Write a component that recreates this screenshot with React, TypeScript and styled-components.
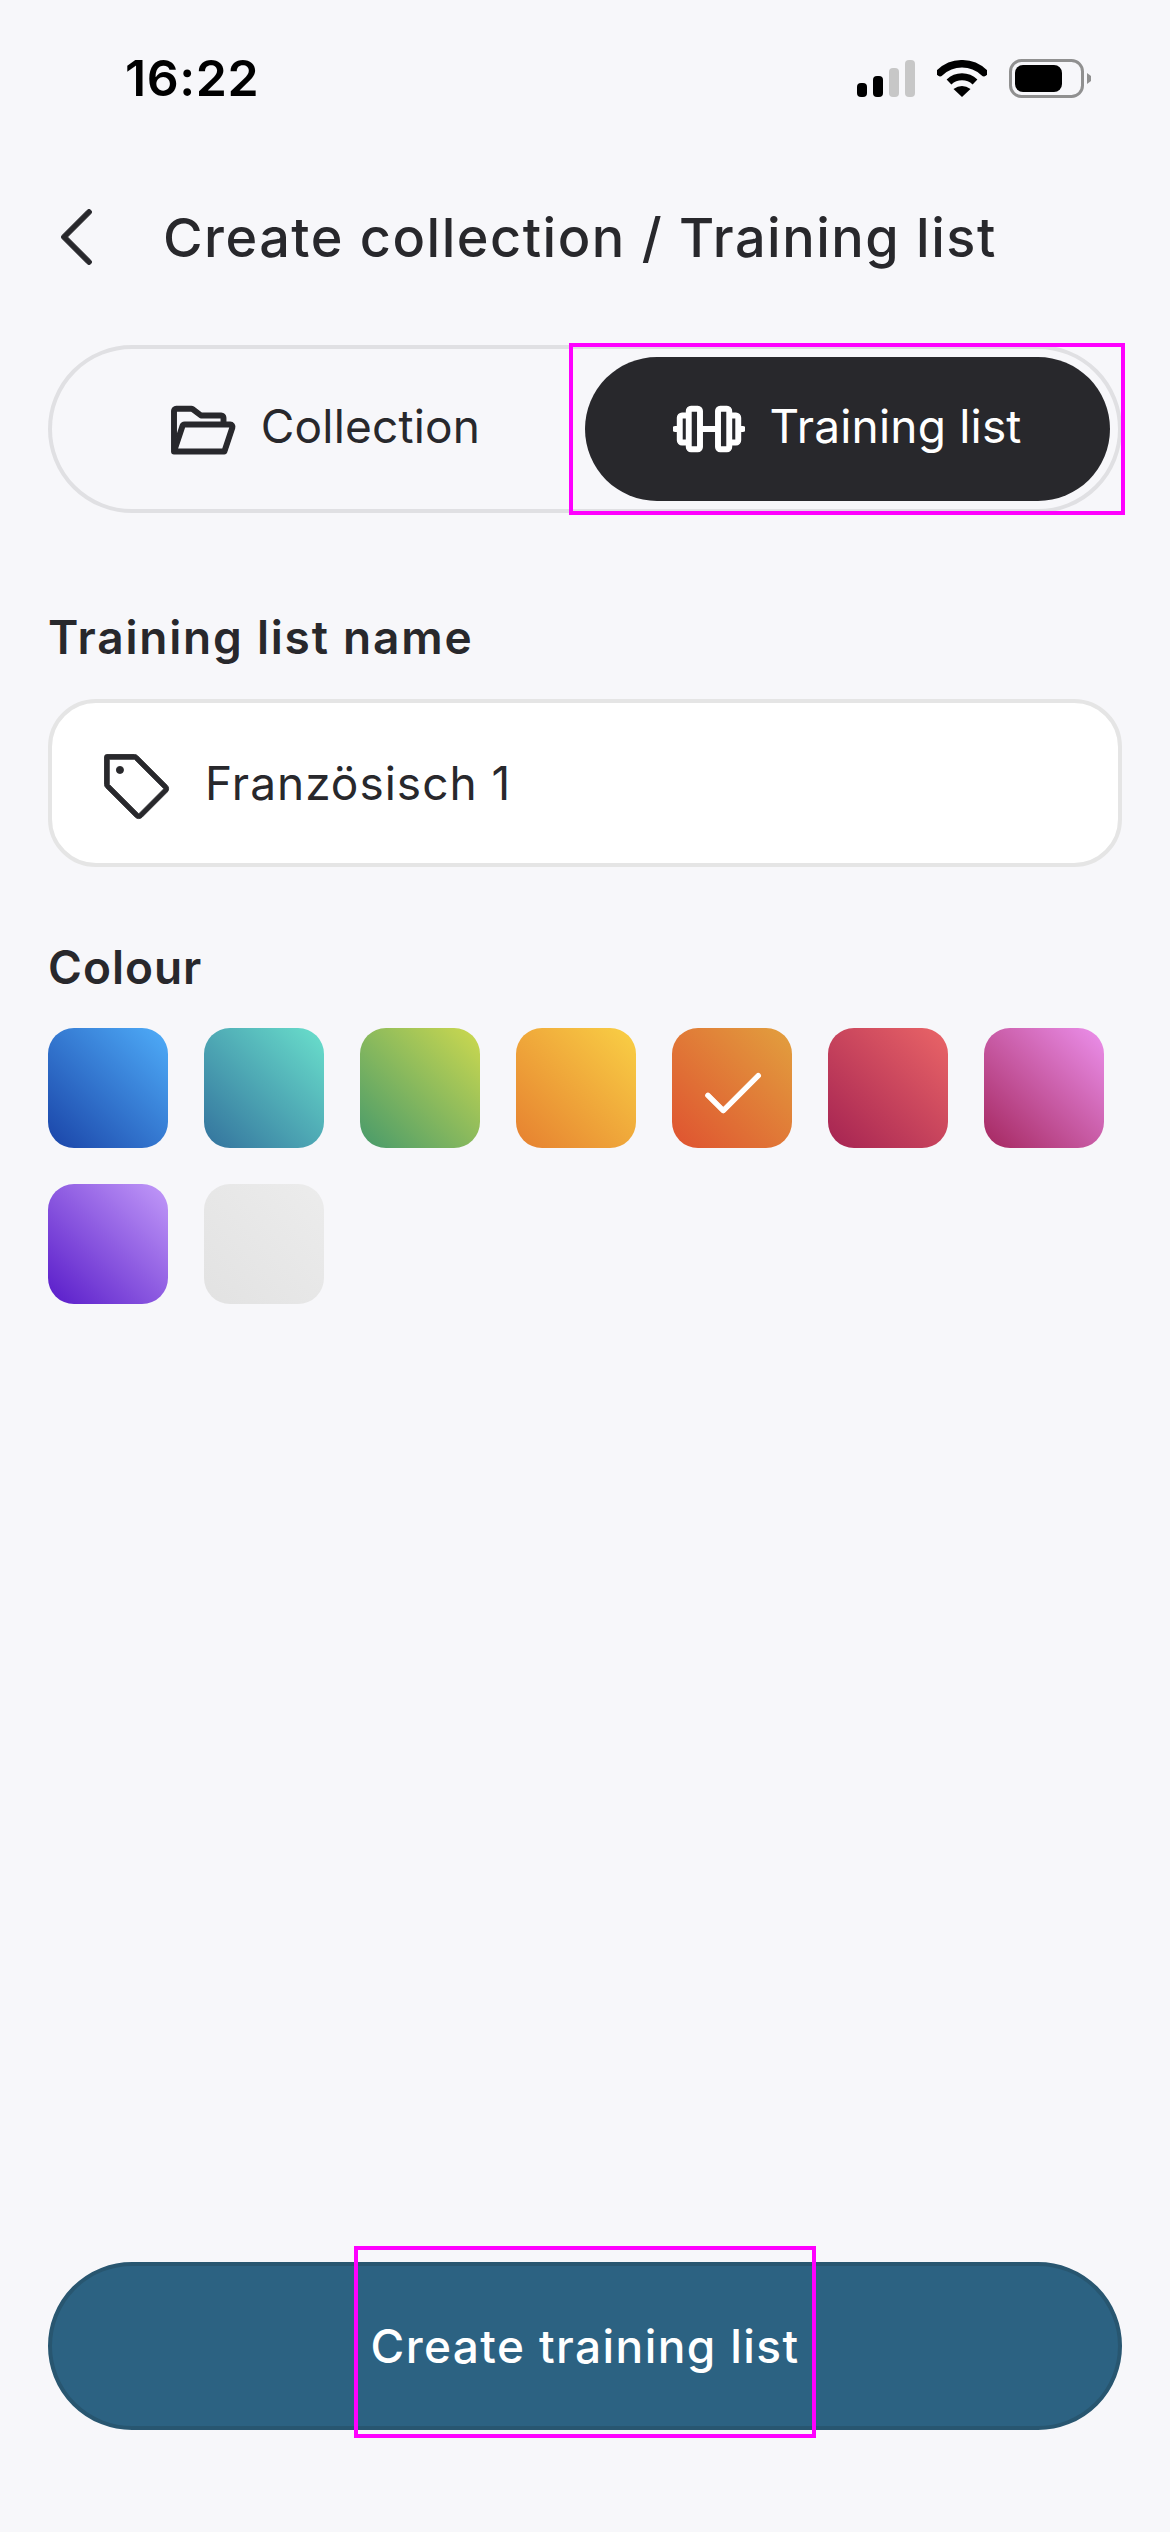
import React from "react";
import styled, { createGlobalStyle } from "styled-components";
import { PiBarbell, PiCaretLeft, PiCheck, PiFolderOpen, PiTag } from "react-icons/pi";

const GlobalStyle = createGlobalStyle`
  * {
    box-sizing: border-box;
  }
  body {
    margin: 0;
    background: #f7f7fa;
    font-family: Inter, "Noto Sans", sans-serif;
    color: #28282c;
  }
`;

const Page = styled.div`
  width: 1170px;
  height: 2532px;
  padding: 0 48px 102px;
  display: flex;
  flex-direction: column;
`;

const StatusBar = styled.div`
  height: 116px;
  margin: 0 -48px;
  padding: 40px 79px 0 125px;
  display: flex;
  align-items: center;
  justify-content: space-between;
`;

const Time = styled.div`
  font-size: 50px;
  font-weight: 600;
  letter-spacing: 0.6px;
  color: #000;
`;

const StatusIcons = styled.div`
  display: flex;
  align-items: center;
  gap: 22px;
`;

const TitleRow = styled.div`
  height: 122px;
  margin-top: 60px;
  display: flex;
  align-items: center;
  font-size: 54px;
  font-weight: 500;
  letter-spacing: 1.5px;
`;

const BackIcon = styled(PiCaretLeft)`
  font-size: 80px;
  margin-left: -9px;
  margin-right: 44px;
  flex: none;
  stroke: currentColor;
  stroke-width: 3;
`;

const Tabs = styled.div`
  margin-top: 47px;
  height: 168px;
  padding: 8px;
  border: 4px solid #e0e0e3;
  border-radius: 84px;
  display: flex;
`;

const Tab = styled.div<{ $active?: boolean }>`
  position: relative;
  flex: 1;
  border-radius: 72px;
  display: flex;
  align-items: center;
  justify-content: center;
  gap: 24px;
  font-size: 46px;
  letter-spacing: 0.2px;
  background: ${(props) => (props.$active ? "#28282c" : "transparent")};
  color: ${(props) => (props.$active ? "#fff" : "#28282c")};

  svg {
    font-size: 72px;
    flex: none;
    stroke: currentColor;
    stroke-width: 5;
  }
`;

const TabLabel = styled.span`
  margin-top: -6px;
`;

const Marker = styled.div<{ $top: number; $bottom: number; $left: number; $right: number }>`
  position: absolute;
  top: ${(props) => props.$top}px;
  bottom: ${(props) => props.$bottom}px;
  left: ${(props) => props.$left}px;
  right: ${(props) => props.$right}px;
  border: 4px solid #ff00ff;
  pointer-events: none;
`;

const FieldLabel = styled.div`
  font-size: 46px;
  font-weight: 600;
  letter-spacing: 1.8px;
  line-height: 56px;
`;

const NameLabel = styled(FieldLabel)`
  margin-top: 96px;
`;

const ColourLabel = styled(FieldLabel)`
  margin-top: 72px;
  letter-spacing: 1px;
`;

const NameInput = styled.div`
  margin-top: 34px;
  height: 168px;
  padding: 0 43px;
  background: #fff;
  border: 4px solid #e5e5e5;
  border-radius: 48px;
  display: flex;
  align-items: center;
  gap: 34px;
  font-size: 46px;
  letter-spacing: 1px;

  svg {
    font-size: 76px;
    flex: none;
    stroke: currentColor;
    stroke-width: 3;
  }
`;

const Swatches = styled.div`
  margin-top: 33px;
  display: grid;
  grid-template-columns: repeat(7, 120px);
  gap: 36px;
`;

const Swatch = styled.div<{ $from: string; $to: string }>`
  height: 120px;
  padding-top: 6px;
  border-radius: 26px;
  display: flex;
  align-items: center;
  justify-content: center;
  color: #fff;
  font-size: 70px;
  background: linear-gradient(45deg, ${(props) => props.$from}, ${(props) => props.$to});

  svg {
    stroke: currentColor;
    stroke-width: 4;
  }
`;

const CreateButton = styled.div`
  position: relative;
  margin-top: auto;
  height: 168px;
  background: #2c6282;
  border: 4px solid #285670;
  border-radius: 84px;
  display: flex;
  align-items: center;
  justify-content: center;
  color: #fff;
  font-size: 46px;
  font-weight: 500;
  letter-spacing: 1.4px;
`;

const colours = [
  { from: "#1a44a8", to: "#4fadf9" },
  { from: "#33729d", to: "#6ae0cc" },
  { from: "#479a6b", to: "#cdd94f" },
  { from: "#e68030", to: "#f9d045" },
  { from: "#df5230", to: "#e2a03e", selected: true },
  { from: "#a52352", to: "#ea6567" },
  { from: "#a5275f", to: "#ec90ec" },
  { from: "#581bc9", to: "#c29af9" },
  { from: "#e2e2e2", to: "#ececec" },
];

const SignalIcon = () => (
  <svg width="58" height="37" viewBox="0 0 58 37">
    <rect x="0" y="23" width="10" height="14" rx="4" fill="#000" />
    <rect x="16" y="16" width="10" height="21" rx="4" fill="#000" />
    <rect x="32" y="8" width="10" height="29" rx="4" fill="#c7c7c7" />
    <rect x="48" y="0" width="10" height="37" rx="4" fill="#c7c7c7" />
  </svg>
);

const WifiIcon = () => (
  <svg width="50" height="37" viewBox="0 0 50 37">
    <path d="M3 12.5 A32 32 0 0 1 47 12.5" fill="none" stroke="#000" strokeWidth="7.5" strokeLinecap="round" />
    <path d="M12 22 A19 19 0 0 1 38 22" fill="none" stroke="#000" strokeWidth="7" strokeLinecap="butt" />
    <path d="M25 37 L16.5 29 Q25 23 33.5 29 Z" fill="#000" />
  </svg>
);

const BatteryIcon = () => (
  <svg width="82" height="39" viewBox="0 0 82 39">
    <rect x="1.5" y="1.5" width="72" height="36" rx="11" fill="none" stroke="#909090" strokeWidth="3" />
    <rect x="6" y="6" width="47" height="27" rx="8" fill="#000" />
    <path d="M78 14 L82 17 L82 22 L78 25 Z" fill="#909090" />
  </svg>
);

export default function App() {
  return (
    <Page>
      <GlobalStyle />
      <StatusBar>
        <Time>16:22</Time>
        <StatusIcons>
          <SignalIcon />
          <WifiIcon />
          <BatteryIcon />
        </StatusIcons>
      </StatusBar>
      <TitleRow>
        <BackIcon />
        Create collection / Training list
      </TitleRow>
      <Tabs>
        <Tab>
          <PiFolderOpen />
          <TabLabel>Collection</TabLabel>
        </Tab>
        <Tab $active>
          <PiBarbell />
          <TabLabel>Training list</TabLabel>
          <Marker $top={-14} $bottom={-14} $left={-16} $right={-15} />
        </Tab>
      </Tabs>
      <NameLabel>Training list name</NameLabel>
      <NameInput>
        <PiTag />
        Französisch 1
      </NameInput>
      <ColourLabel>Colour</ColourLabel>
      <Swatches>
        {colours.map((colour) => (
          <Swatch key={colour.from} $from={colour.from} $to={colour.to}>
            {colour.selected && <PiCheck />}
          </Swatch>
        ))}
      </Swatches>
      <CreateButton>
        Create training list
        <Marker $top={-20} $bottom={-12} $left={302} $right={302} />
      </CreateButton>
    </Page>
  );
}
